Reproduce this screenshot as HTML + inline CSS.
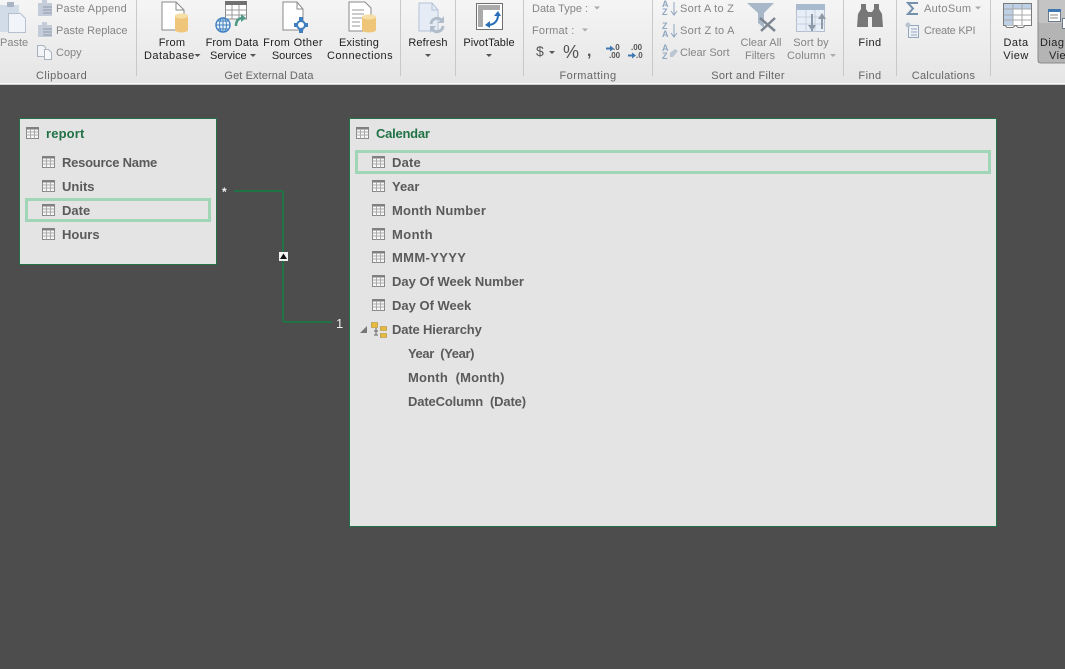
<!DOCTYPE html>
<html><head><meta charset="utf-8"><style>
html,body{margin:0;padding:0}
body{width:1065px;height:669px;overflow:hidden;background:#4d4d4d;position:relative;font-family:"Liberation Sans",sans-serif}
#rib{position:absolute;left:0;top:0;width:1065px;height:83px;background:linear-gradient(#f5f5f5,#e5e5e5);border-bottom:1px solid #f8f8f8}
#rib2{position:absolute;left:0;top:84px;width:1065px;height:1px;background:#cfcfcf}
.sep{position:absolute;top:0;width:1px;height:76px;background:#c8c8c8}
.t{position:absolute;font-size:11px;line-height:13px;white-space:nowrap;color:#222;letter-spacing:.2px}
.c{transform:translateX(-50%);text-align:center}
.g{color:#858585}
.l{color:#666}
.f{position:absolute;font-size:13px;font-weight:bold;color:#5a5a5a;line-height:16px;white-space:nowrap}
.h{position:absolute;font-size:13px;font-weight:bold;color:#217346;line-height:16px;white-space:nowrap}
.box{position:absolute;background:#e4e4e4;border:1px solid #217346;box-sizing:border-box}
.sel{position:absolute;border:3px solid #a0d6b7;box-sizing:border-box}
svg{position:absolute;overflow:visible}
</style></head><body>
<div id="rib"></div><div id="rib2"></div>
<div class="sep" style="left:136px"></div><div class="sep" style="left:400px"></div><div class="sep" style="left:455px"></div><div class="sep" style="left:523px"></div><div class="sep" style="left:652px"></div><div class="sep" style="left:843px"></div><div class="sep" style="left:896px"></div><div class="sep" style="left:990px"></div>

<svg width="1065" height="84" style="left:0;top:0">
<!-- paste -->
<path d="M0 5H19V32H0Z" fill="#d2dbe8"/><path d="M7 2h7v5H7z" fill="#aab4c2"/><path d="M8.500 13.500h12l5 5v14h-17z" fill="#f1f4f8" stroke="#b4c0d0"/>
<g fill="#c3ccd8"><rect x="38" y="3" width="14" height="13"/><rect x="38" y="25" width="14" height="12"/><rect x="42" y="0" width="5" height="4"/><rect x="42" y="22" width="5" height="4"/></g>
<g stroke="#8e99a8" fill="none"><path d="M43 7h9M43 10h9M43 13h9M43 29h9M43 32h9M43 35h9"/></g>
<path d="M37.500 45.500h6l2 2v9h-8z" fill="#f1f3f6" stroke="#a9b3c0"/><path d="M44.500 49.500h4l3 3v7h-7z" fill="#f7f8fa" stroke="#a9b3c0"/>
<!-- from database -->
<path d="M162 2h14l8 8v20h-22z" fill="#fff" stroke="#8a8a8a"/><path d="M176 2v8h8" fill="none" stroke="#8a8a8a"/>
<path d="M175 16a6.500 2.500 0 0 1 13 0v14a6.500 2.500 0 0 1-13 0z" fill="#efc679"/><ellipse cx="181.500" cy="16" rx="6.500" ry="2.500" fill="#f7dfa8"/>
<!-- from data service -->
<rect x="225.500" y="2" width="21" height="17" fill="#fff" stroke="#8a8a8a"/><rect x="225" y="1" width="22" height="4" fill="#707070"/>
<path d="M225 10h21M225 15h21M232 5v14M239 5v14" stroke="#9a9a9a" fill="none"/>
<path d="M236 26c0-6 3-8 7-8" fill="none" stroke="#4f9a87" stroke-width="2.500"/><path d="M241 14l5 4-5 4z" fill="#4f9a87"/>
<circle cx="223" cy="25" r="7" fill="#eaf2fa" stroke="#3f7fbf" stroke-width="1.400"/><path d="M216 25h14M223 18v14M218 21h10M218 29h10" stroke="#3f7fbf" fill="none"/><ellipse cx="223" cy="25" rx="3.500" ry="7" fill="none" stroke="#3f7fbf"/>
<!-- other sources -->
<path d="M283 2h14l6 7v21h-20z" fill="#fff" stroke="#8a8a8a"/><path d="M297 2v7h6" fill="none" stroke="#8a8a8a"/>
<circle cx="301" cy="25" r="4" fill="#fff" stroke="#3f7fbf" stroke-width="2"/><path d="M294 23h4v4h-4zM304 23h4v4h-4zM299 17h4v4h-4zM299 29h4v4h-4z" fill="#3f7fbf"/>
<!-- existing -->
<path d="M349 2h16l6 6v23h-22z" fill="#fff" stroke="#8a8a8a"/><path d="M352 10h12M352 14h12M352 18h12M352 22h8M352 26h8" stroke="#9a9a9a"/>
<path d="M362 17a7 2.500 0 0 1 14 0v13a7 2.500 0 0 1-14 0z" fill="#efc679"/><ellipse cx="369" cy="17" rx="7" ry="2.500" fill="#f7dfa8"/>
<!-- refresh -->
<path d="M419 3h13l6 7v21h-19z" fill="#e6ecf5" stroke="#b4c3d8"/><path d="M432 3v7h6" fill="none" stroke="#b4c3d8"/>
<path d="M431 24a6 6 0 0 1 11-3M443 26a6 6 0 0 1-11 3" fill="none" stroke="#b0bcca" stroke-width="3"/><path d="M444 16v7h-6zM430 33v-7h6z" fill="#b0bcca"/>
<!-- pivot -->
<rect x="476.500" y="3.500" width="26" height="26" fill="#fff" stroke="#707070"/><rect x="483" y="5" width="17" height="5" fill="#aaa"/><rect x="478" y="5" width="5" height="22" fill="#aaa"/>
<path d="M488 25c6 0 10-4 10-10" fill="none" stroke="#2a6fb5" stroke-width="2"/><path d="M494 16l4-5 3 5zM490 21v7l-5-3z" fill="#2a6fb5"/>
<!-- format arrows -->
<path d="M606 47.500h4v-2l4 3-4 3v-2h-4zM628 54.500h4v-2l4 3-4 3v-2h-4z" fill="#3f78b0"/>
<!-- sort icons -->
<path d="M674 2v12M671 11l3 4 3-4M674 24v12M671 33l3 4 3-4" fill="none" stroke="#8fa6c0"/>
<path d="M670 53l5-4 3 2-5 6h-3z" fill="#bcc6d2"/>
<!-- filter -->
<path d="M747 3h27l-10 10v15l-6-5V13z" fill="#a9b8c8"/><path d="M760 18l15 13M775 18l-14 13" stroke="#7d8792" stroke-width="2.500"/>
<!-- sort by column -->
<rect x="796.500" y="4.500" width="28" height="27" fill="#e8eef7" stroke="#b4c0cf"/><rect x="796" y="4" width="29" height="6" fill="#a9b9ce"/><path d="M806 10v22M815 10v22M796 17h29M796 24h29" stroke="#c6d0dc"/><path d="M812 14v17M822 29V14" stroke="#8e9aa8" stroke-width="2"/><path d="M808 25l4 6 4-6zM818 19l4-6 4 6z" fill="#8e9aa8"/>
<!-- binoculars -->
<path d="M857 27l1-13 3-5V4h5v5l2 3v15zM883 27l-1-13-3-5V4h-5v5l-2 3v15z" fill="#777"/><rect x="868" y="12" width="4" height="5" fill="#777"/>
<!-- sigma / kpi -->
<path d="M918 3h-10l5 5.500-5 5.500h10" fill="none" stroke="#7590ad" stroke-width="2"/>
<rect x="908.500" y="25.500" width="10" height="12" fill="#eef2f7" stroke="#93a6bb"/><path d="M911 29h6M911 32h6M911 35h6" stroke="#93a6bb"/><circle cx="908" cy="25" r="2.500" fill="#b9c3cf"/>
<!-- data view -->
<rect x="1003.500" y="3.500" width="28" height="22" fill="#fff" stroke="#7b7b7b"/><rect x="1004" y="4" width="27" height="5" fill="#bdd0e6"/><rect x="1004" y="4" width="9" height="21" fill="#bdd0e6"/><path d="M1013 4v21M1022 4v21M1004 9h27M1004 15h27M1004 20h27" stroke="#a8a8a8"/><path d="M1005 25.500l2 2h6l2-2M1016 25.500l2 2h5l2-2" fill="#fff" stroke="#7b7b7b"/>
<!-- diagram view btn -->
<path d="M1038 63V0h30v63z" fill="#b4b4b4"/><path d="M1038 0h30v23h-30z" fill="#c4c4c4"/><path d="M1038 0v60q0 3 3 3h27" fill="none" stroke="#8a8a8a"/>
<rect x="1048.500" y="9.500" width="12" height="12" fill="#fff" stroke="#6a7a8c"/><rect x="1048" y="9" width="13" height="3" fill="#3f78b0"/><path d="M1050 15h8M1050 18h8" stroke="#888"/>
<rect x="1062.500" y="18.500" width="5" height="10" fill="#fff" stroke="#6a7a8c"/>
<!-- dropdown carets -->
<g fill="#555"><path d="M194.500 54h6l-3 3zM250 54h6l-3 3zM425 54h6l-3 3zM486 54h6l-3 3zM549 51h6l-3 3z"/></g>
<g fill="#aaa"><path d="M594 6.500h6l-3 3zM582 28.500h6l-3 3zM830 54h6l-3 3zM975 6.500h6l-3 3z"/></g>
</svg>

<span class="t g" style="left:0;top:37px;letter-spacing:0">Paste</span>
<span class="t g" style="left:56px;top:3px">Paste Append</span>
<span class="t g" style="left:56px;top:25px;letter-spacing:0">Paste Replace</span>
<span class="t g" style="left:56px;top:47px;letter-spacing:0">Copy</span>
<span class="t l" style="left:36px;top:70px;letter-spacing:.45px">Clipboard</span>

<span class="t c" style="left:172px;top:37px">From</span><span class="t" style="left:144px;top:50px;letter-spacing:.45px">Database</span>
<span class="t c" style="left:232px;top:37px;letter-spacing:.1px">From Data</span><span class="t" style="left:210px;top:50px;letter-spacing:0">Service</span>
<span class="t c" style="left:293px;top:37px;letter-spacing:.35px">From Other</span><span class="t c" style="left:292px;top:50px;letter-spacing:0">Sources</span>
<span class="t c" style="left:359px;top:37px">Existing</span><span class="t c" style="left:360px;top:50px;letter-spacing:.45px">Connections</span>
<span class="t l c" style="left:269px;top:70px;letter-spacing:.1px">Get External Data</span>
<span class="t c" style="left:428px;top:37px;letter-spacing:.1px">Refresh</span>
<span class="t c" style="left:489px;top:37px;letter-spacing:.05px">PivotTable</span>

<span class="t g" style="left:532px;top:3px;letter-spacing:0">Data Type :</span>
<span class="t g" style="left:532px;top:25px">Format :</span>
<span class="t" style="left:536px;top:45px;font-size:14px;color:#555;letter-spacing:0">$</span>
<span class="t" style="left:563px;top:43px;font-size:18px;line-height:18px;color:#555;letter-spacing:-1px">%</span>
<span class="t" style="left:587px;top:45px;font-size:16px;font-weight:bold;color:#555;letter-spacing:0">,</span>
<span class="t" style="left:613px;top:44px;font-size:8px;line-height:8px;font-weight:bold;color:#555;letter-spacing:0">.0</span>
<span class="t" style="left:609px;top:52px;font-size:8px;line-height:8px;font-weight:bold;color:#555;letter-spacing:0">.00</span>
<span class="t" style="left:631px;top:44px;font-size:8px;line-height:8px;font-weight:bold;color:#555;letter-spacing:0">.00</span>
<span class="t" style="left:636px;top:52px;font-size:8px;line-height:8px;font-weight:bold;color:#555;letter-spacing:0">.0</span>
<span class="t l c" style="left:588px;top:70px;letter-spacing:.45px">Formatting</span>

<span class="t" style="left:662px;top:0;font-size:9px;line-height:8px;font-weight:bold;color:#8fa6c0;letter-spacing:0">A<br>Z</span>
<span class="t" style="left:662px;top:22px;font-size:9px;line-height:8px;font-weight:bold;color:#8fa6c0;letter-spacing:0">Z<br>A</span>
<span class="t" style="left:662px;top:44px;font-size:9px;line-height:8px;font-weight:bold;color:#8fa6c0;letter-spacing:0">A<br>Z</span>
<span class="t g" style="left:680px;top:3px;letter-spacing:.25px">Sort A to Z</span>
<span class="t g" style="left:680px;top:25px;letter-spacing:.25px">Sort Z to A</span>
<span class="t g" style="left:680px;top:47px;letter-spacing:0">Clear Sort</span>
<span class="t g c" style="left:761px;top:37px;letter-spacing:0">Clear All</span><span class="t g c" style="left:760px;top:50px;letter-spacing:0">Filters</span>
<span class="t g c" style="left:811px;top:37px;letter-spacing:.1px">Sort by</span><span class="t g" style="left:787px;top:50px;letter-spacing:.1px">Column</span>
<span class="t l c" style="left:748px;top:70px;letter-spacing:.3px">Sort and Filter</span>
<span class="t c" style="left:870px;top:37px;letter-spacing:.45px">Find</span><span class="t l c" style="left:870px;top:70px;letter-spacing:.45px">Find</span>
<span class="t g" style="left:924px;top:3px;letter-spacing:.3px">AutoSum</span>
<span class="t g" style="left:924px;top:25px;letter-spacing:-.25px">Create KPI</span>
<span class="t l c" style="left:943.500px;top:70px;letter-spacing:.3px">Calculations</span>
<span class="t c" style="left:1016px;top:37px;letter-spacing:.45px">Data</span><span class="t c" style="left:1016px;top:50px;letter-spacing:.45px">View</span>
<span class="t" style="left:1040px;top:37px;letter-spacing:.45px">Diag</span><span class="t" style="left:1049px;top:50px;letter-spacing:.45px">Vie</span>

<!-- report -->
<div class="box" style="left:19px;top:118px;width:198px;height:147px"></div>
<div class="sel" style="left:25px;top:198px;width:186px;height:24px"></div>
<!-- calendar -->
<div class="box" style="left:349px;top:118px;width:648px;height:409px"></div>
<div class="sel" style="left:355px;top:150px;width:636px;height:24px"></div>

<svg width="1065" height="669" style="left:0;top:0">
<defs><g id="ti"><rect x=".5" y=".5" width="12" height="11" fill="#f7f7f7" stroke="#8a8a8a"/><rect x="0" y="0" width="13" height="2.500" fill="#808080"/><path d="M.5 5h12M.5 8h12M4.500 2v9.500M8.500 2v9.500" stroke="#aaa" stroke-width="1" fill="none"/></g></defs>
<use href="#ti" x="26" y="127"/><use href="#ti" x="356" y="127"/>
<use href="#ti" x="42" y="156"/><use href="#ti" x="42" y="180"/><use href="#ti" x="42" y="204"/><use href="#ti" x="42" y="228"/>
<use href="#ti" x="372" y="156"/><use href="#ti" x="372" y="180"/><use href="#ti" x="372" y="204"/><use href="#ti" x="372" y="228"/><use href="#ti" x="372" y="251"/><use href="#ti" x="372" y="275"/><use href="#ti" x="372" y="299"/>
<path d="M234 191H281q2 0 2 2V320q0 2 2 2H332" fill="none" stroke="#217346" stroke-width="2"/>
<rect x="279" y="252" width="9" height="9" fill="#f2f2f2"/><path d="M283.500 253.500l3.500 5.500h-7z" fill="#111"/>
<path d="M360 333l7-7v7z" fill="#777"/>
<g fill="#e7b93f" stroke="#a98a2c" stroke-width=".6"><path d="M371.500 322.500h6v5h-6z"/><path d="M380.500 326.500h6v4h-6z"/><path d="M380.500 333.500h6v4h-6z"/></g>
<path d="M376 328v7M374 331h4M374 335h4" stroke="#666" fill="none"/>
</svg>
<span class="t" style="left:222px;top:186px;color:#f2f2f2;font-size:12px;font-weight:bold;letter-spacing:0">*</span>
<span class="t" style="left:336px;top:317px;color:#eee;font-size:13px;letter-spacing:0">1</span>

<span class="h" style="left:46px;top:126px;letter-spacing:.15px">report</span>
<span class="f" style="left:62px;top:155px;letter-spacing:-.25px">Resource Name</span>
<span class="f" style="left:62px;top:179px">Units</span>
<span class="f" style="left:62px;top:203px">Date</span>
<span class="f" style="left:62px;top:227px">Hours</span>

<span class="h" style="left:376px;top:126px;letter-spacing:-.25px">Calendar</span>
<span class="f" style="left:392px;top:155px;letter-spacing:.2px">Date</span>
<span class="f" style="left:392px;top:179px">Year</span>
<span class="f" style="left:392px;top:203px;letter-spacing:.2px">Month Number</span>
<span class="f" style="left:392px;top:227px;letter-spacing:.4px">Month</span>
<span class="f" style="left:392px;top:250px;letter-spacing:.35px">MMM-YYYY</span>
<span class="f" style="left:392px;top:274px">Day Of Week Number</span>
<span class="f" style="left:392px;top:298px">Day Of Week</span>
<span class="f" style="left:392px;top:322px;letter-spacing:-.15px">Date Hierarchy</span>
<span class="f" style="left:408px;top:346px;letter-spacing:-.4px">Year&nbsp; (Year)</span>
<span class="f" style="left:408px;top:370px;letter-spacing:.2px">Month&nbsp; (Month)</span>
<span class="f" style="left:408px;top:394px;letter-spacing:-.15px">DateColumn&nbsp; (Date)</span>
</body></html>
